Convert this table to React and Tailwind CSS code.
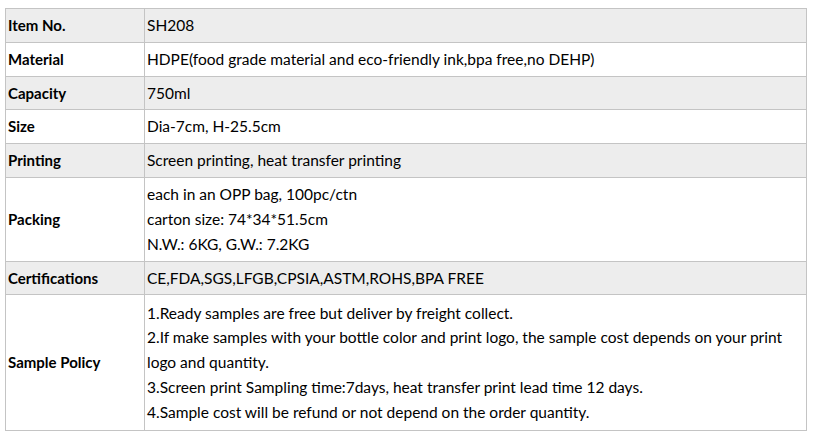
import React from "react";

const rows = [
  { label: "Item No.", lines: ["SH208"], h: "h-[34px]", gray: true },
  { label: "Material", lines: ["HDPE(food grade material and eco-friendly ink,bpa free,no DEHP)"], h: "h-[34px]" },
  { label: "Capacity", lines: ["750ml"], h: "h-[33px]", gray: true },
  { label: "Size", lines: ["Dia-7cm, H-25.5cm"], h: "h-[34px]" },
  { label: "Printing", lines: ["Screen printing, heat transfer printing"], h: "h-[34px]", gray: true },
  {
    label: "Packing",
    lines: ["each in an OPP bag, 100pc/ctn", "carton size: 74*34*51.5cm", "N.W.: 6KG, G.W.: 7.2KG"],
    h: "h-[84px]",
  },
  { label: "Certifications", lines: ["CE,FDA,SGS,LFGB,CPSIA,ASTM,ROHS,BPA FREE"], h: "h-[33px]", gray: true },
  {
    label: "Sample Policy",
    lines: [
      "1.Ready samples are free but deliver by freight collect.",
      "2.If make samples with your bottle color and print logo, the sample cost depends on your print",
      "logo and quantity.",
      "3.Screen print Sampling time:7days, heat transfer print lead time 12 days.",
      "4.Sample cost will be refund or not depend on the order quantity.",
    ],
    h: "h-[136px]",
  },
];

export default function App() {
  return (
    <div className="w-[814px] h-[439px] bg-white pt-2 pl-[5px]" style={{ fontFamily: "Lato, 'Liberation Sans', sans-serif" }}>
      <div className="w-[802px] border-t border-l border-[#c4c4c4] text-black">
        {rows.map((r) => (
          <div key={r.label} className={`flex border-b border-[#c4c4c4] ${r.h} ${r.gray ? "bg-[#ededed]" : "bg-white"}`}>
            <div className="w-[139px] shrink-0 border-r border-[#c4c4c4] flex items-center pl-[2px] font-bold text-[15px]">
              {r.label}
            </div>
            <div className="flex-1 border-r border-[#c4c4c4] flex flex-col justify-center pl-[2px] text-[15.5px] leading-[24.8px] whitespace-nowrap">
              {r.lines.map((l, i) => (
                <div key={i}>{l}</div>
              ))}
            </div>
          </div>
        ))}
      </div>
    </div>
  );
}
